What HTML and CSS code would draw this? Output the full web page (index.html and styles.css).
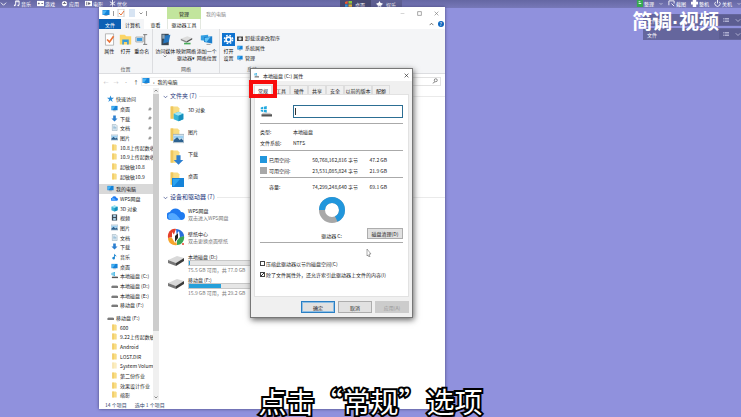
FILE: index.html
```html
<!DOCTYPE html>
<html lang="zh-CN">

<head>
    <meta charset="UTF-8">
    <meta name="viewport" content="width=device-width, initial-scale=1.0">
    <title>我的电脑</title>
    <link rel="stylesheet" href="styles.css">
</head>

<body>
    <!-- shared icons -->
    <svg class="defs" width="0" height="0">
        <symbol id="folder" viewBox="0 0 16 16"><path d="M3 1h8l2 2v12H3z" fill="#f8dc83"/><path d="M3 1h3v14H3z" fill="#efc75e"/></symbol>
        <symbol id="monitor" viewBox="0 0 16 16"><path d="M1 2h14v10H1z" fill="#1583d8"/><path d="M2 3h8L4 11H2z" fill="#49b5f5"/><path d="M5 13h6v1H5z" fill="#567"/></symbol>
        <symbol id="down" viewBox="0 0 16 16"><path d="M5 1h6v7h4l-7 7-7-7h4z" fill="#2c7fd0"/></symbol>
        <symbol id="doc" viewBox="0 0 16 16"><path d="M3 1h8l3 3v11H3z" fill="#e8f1f7" stroke="#7d97a8"/><path d="M5 5h5M5 8h7M5 11h7" stroke="#4587b5"/></symbol>
        <symbol id="picture" viewBox="0 0 16 16"><path d="M0 2h16v12H0z" fill="#dfe9f0" stroke="#8ca3b5"/><path d="M1 4h14v4H1z" fill="#9bd0f2"/><path d="M1 10l5-4 4 4 2-2 3 3v2H1z" fill="#2c6290"/></symbol>
        <symbol id="cube" viewBox="0 0 16 16"><path d="M8 1l7 3v8l-7 3-7-3V4z" fill="#38b5d8"/><path d="M8 1l7 3-7 3-7-3z" fill="#a2e5f3"/><path d="M8 7l7-3v8l-7 3z" fill="#168fbd"/></symbol>
        <symbol id="cloud" viewBox="0 0 18 14"><path d="M4 13a4 4 0 0 1-1-8 6 6 0 0 1 11 0 4 4 0 0 1 0 8z" fill="#1f7af0"/><path d="M2 7c5-3 8 1 12 6H5C2 13 0 10 2 7z" fill="#54a9ff"/></symbol>
        <symbol id="video" viewBox="0 0 16 16"><path d="M2 1h12v14H2z" fill="#3d4b57"/><path d="M5 2h6v5H5zM5 9h6v5H5z" fill="#a9cfe6"/></symbol>
        <symbol id="note" viewBox="0 0 16 16"><path d="M7 1c1 3 6 3 5 8-1-3-3-3-3-3v6a3 3 0 1 1-2-3z" fill="#1c86d1"/></symbol>
        <symbol id="drive" viewBox="0 0 18 12"><path d="M1 6l9-4 7 2-8 5z" fill="#d9d9d9"/><path d="M1 6l8 3v3L1 9z" fill="#777"/><path d="M9 9l8-5v3l-8 5z" fill="#3c3c3c"/></symbol>
        <symbol id="smalldrive" viewBox="0 0 16 16"><path d="M3 7h11l2 3H1z" fill="#c8c8c8"/><path d="M1 10h15v3H1z" fill="#3c3c3c"/></symbol>
        <symbol id="windrive" viewBox="0 0 16 16"><path d="M1 2l3-1v3H1zM5 1l4-1v4H5zM1 5h3v3L1 7zM5 5h4v4L5 8z" fill="#22a9df"/><path d="M4 9h9l3 2H2z" fill="#c8c8c8"/><path d="M2 11h14v3H2z" fill="#555"/></symbol>
        <symbol id="star" viewBox="0 0 16 16"><path d="M8 1l2 5h6l-5 4 2 6-5-4-5 4 2-6-5-4h6z" fill="#2b8dd9"/></symbol>
        <symbol id="pin" viewBox="0 0 8 8"><path d="M4 1l3 3-2 1-1 2-3-3 2-1zM3 5L1 7" fill="#999" stroke="#888"/></symbol>
        <symbol id="chev" viewBox="0 0 8 8"><path d="M1 3l3 3 3-3" fill="none" stroke="currentColor"/></symbol>
        <symbol id="up" viewBox="0 0 8 8"><path d="M1 5l3-3 3 3" fill="none" stroke="currentColor"/></symbol>
        <symbol id="cross" viewBox="0 0 8 8"><path d="M1 1l6 6M7 1L1 7" fill="none" stroke="currentColor"/></symbol>
        <symbol id="list" viewBox="0 0 8 6"><path d="M0 1h1M2 1h6M0 3h1M2 3h6M0 5h1M2 5h6" stroke="currentColor"/></symbol>
        <symbol id="gear" viewBox="0 0 16 16"><path d="M0 0h16v16H0z" fill="#0f73d0"/><circle cx="8" cy="8" r="3" fill="none" stroke="#fff" stroke-width="2"/><circle cx="8" cy="8" r="5" fill="none" stroke="#fff" stroke-width="2" stroke-dasharray="2 2"/></symbol>
    </svg>

    <header class="topbar">
        <nav class="top-left">
            <a href="#"><svg viewBox="0 0 8 8"><use href="#chev"/></svg></a>
            <a href="#"><svg viewBox="0 0 8 8"><path d="M3 6V1h4v5M3 2h4" fill="none" stroke="#fff"/><circle cx="2" cy="6" r="1" fill="#fff"/><circle cx="6" cy="6" r="1" fill="#fff"/></svg>音乐</a>
            <a href="#"><svg viewBox="0 0 8 8"><path d="M0 1h8v6H0z" fill="#fff"/><path d="M1 4h2M2 3v2M5 4h2" stroke="#667"/></svg>游戏</a>
            <a href="#"><svg viewBox="0 0 8 8"><circle cx="4" cy="4" r="3" fill="#fff"/><path d="M2 4h4M4 2v2" stroke="#667"/></svg>应用</a>
            <a href="#"><svg viewBox="0 0 8 8"><path d="M0 1h8v6H0z" fill="#fff"/><path d="M2 2v4M4 3l2 1-2 1z" stroke="#667"/></svg>电影</a>
            <a href="#"><svg viewBox="0 0 8 8"><path d="M4 0v8M1 2l6 4M7 2L1 6" stroke="#fff"/></svg>优化</a>
        </nav>
        <nav class="top-mid">
            <a href="#" class="current"><svg viewBox="0 0 8 8"><path d="M0 1l3-1v3H0z" fill="#f65b2e"/><path d="M4 0h4v3H4z" fill="#8cc63f"/><path d="M0 4h3v3H0z" fill="#2ea8e8"/><path d="M4 4h4v4H4z" fill="#fcc62d"/></svg>桌面</a>
            <a href="#"><svg viewBox="0 0 8 8"><path d="M4 0l1 2 3 1-2 2v3L4 6 2 8V5L0 3l3-1z" fill="#fff"/></svg>娱乐</a>
        </nav>
        <nav class="top-right">
            <a href="#"><svg viewBox="0 0 8 8"><path d="M1 0h7v8H1z" fill="#36a852"/><path d="M3 2h2M3 4h3" stroke="#fff"/></svg>整理</a>
            <a href="#"><svg class="tiny"><use href="#chev"/></svg></a>
            <a href="#"><svg viewBox="0 0 8 8"><path d="M1 6V1h6v3M4 4l3 3" fill="none" stroke="#fff"/></svg>截图</a>
            <a href="#"><svg viewBox="0 0 8 8"><path d="M0 2h8v3H0zM2 0h4v2H2zM2 5h4v3H2z" fill="#fff"/></svg>整机</a>
            <a href="#"><svg viewBox="0 0 8 8"><path d="M2 2a3 3 0 1 0 4 0M4 0v4" fill="none" stroke="#fff"/></svg>关机</a>
            <a href="#"><svg class="tiny"><use href="#chev"/></svg></a>
        </nav>
    </header>

    <aside class="widgets">
        <div class="widget"><span>文件夹</span><button aria-label="文件夹菜单"><svg><use href="#list"/></svg><svg><use href="#chev"/></svg></button></div>
        <div class="widget"><span>文件</span><button aria-label="文件菜单"><svg><use href="#list"/></svg><svg><use href="#chev"/></svg></button></div>
    </aside>
    <div class="watermark">简调·视频</div>

    <main class="explorer">
        <div class="titlebar">
            <div class="quick">
                <svg><use href="#monitor"/></svg><i></i>
                <svg viewBox="0 0 8 8"><path d="M1 0h6v8H1z" fill="#fff" stroke="#ccc"/><path d="M2 4l2 2 3-4" fill="none" stroke="#e8733a"/></svg>
                <svg viewBox="0 0 8 8"><path d="M1 0h6v8H1z" fill="#d7e4f3"/></svg>
                <svg class="tiny"><use href="#chev"/></svg><i></i>
            </div>
            <span class="context">管理</span>
            <span class="window-name">我的电脑</span>
            <div class="controls">
                <button aria-label="最小化"><svg viewBox="0 0 8 8"><path d="M1 4h6" stroke="#bbb"/></svg></button>
                <button aria-label="最大化"><svg viewBox="0 0 8 8"><path d="M1 1h6v6H1z" fill="none" stroke="#777"/></svg></button>
                <button aria-label="关闭"><svg><use href="#cross"/></svg></button>
            </div>
        </div>
        <div class="tabs">
            <button class="file">文件</button>
            <button class="open">计算机</button>
            <button>查看</button>
            <button class="tool">驱动器工具</button>
            <div class="tabs-end"><svg><use href="#up"/></svg><span class="help">?</span></div>
        </div>
        <div class="ribbon">
            <section class="group place">
                <div class="actions">
                    <button><svg viewBox="0 0 16 16"><path d="M3 1h10v14H3z" fill="#fff" stroke="#aaa"/><path d="M5 8l3 3 5-7" fill="none" stroke="#e8733a" stroke-width="2"/></svg>属性</button>
                    <button><svg viewBox="0 0 16 16"><path d="M1 2h6l2 2h6v10H1z" fill="#fbd567"/><path d="M4 14V8h8v6h-2v-3H6v3z" fill="#379ad8"/></svg>打开</button>
                    <button><svg viewBox="0 0 16 16"><path d="M1 5h9v6H1z" fill="#fff" stroke="#999"/><path d="M2 6h7v4H2z" fill="#3e9bdc"/><path d="M10 2h5M12 2v12M10 14h5" stroke="#666"/></svg>重命名</button>
                </div>
                <p>位置</p>
            </section>
            <section class="group net">
                <div class="actions">
                    <button><svg viewBox="0 0 16 16"><path d="M3 1h9v14H3z" fill="#394856"/><path d="M7 3l7-1-2 9-7 2z" fill="#2878c0"/><path d="M4 2h3v5H4z" fill="#8fa5b5"/></svg>访问媒体<svg class="tiny"><use href="#chev"/></svg></button>
                    <button><svg viewBox="0 0 16 16"><path d="M1 7l8-3 6 2-7 4z" fill="#ddd"/><path d="M1 7l7 3v2L1 9z" fill="#888"/><path d="M8 10l7-4v2l-7 4z" fill="#555"/><path d="M5 13h8" stroke="#48ad5a" stroke-width="2"/></svg>映射网络<br>驱动器▾</button>
                    <button><svg viewBox="0 0 16 16"><path d="M1 3l9-1v8l-9-1z" fill="#35a0e2"/><path d="M5 5l10-1v9L5 11z" fill="#1c7fcd"/><path d="M6 6l7-1-5 6-2-1z" fill="#66c7f7"/><path d="M8 14h5" stroke="#888"/></svg>添加一个<br>网络位置</button>
                </div>
                <p>网络</p>
            </section>
            <section class="group system">
                <div class="actions">
                    <button><svg><use href="#gear"/></svg>打开<br>设置</button>
                    <div class="stack">
                        <button><svg viewBox="0 0 8 8"><path d="M0 2h8v6H0z" fill="#444"/><circle cx="4" cy="5" r="2" fill="#ddd"/></svg>卸载或更改程序</button>
                        <button><svg><use href="#monitor"/></svg>系统属性</button>
                        <button><svg><use href="#monitor"/></svg>管理</button>
                    </div>
                </div>
                <p>系统</p>
            </section>
        </div>
        <div class="address">
            <button class="dim">←</button><button class="dim">→</button><button class="dim">·</button><button>↑</button>
            <div class="path"><svg><use href="#monitor"/></svg><span>›</span>我的电脑</div>
            <div class="search"><svg viewBox="0 0 8 8"><circle cx="5" cy="3" r="2" fill="none" stroke="#666"/><path d="M4 5L1 7" stroke="#666"/></svg></div>
        </div>
        <div class="body">
            <nav class="tree">
                <a href="#" class="root"><svg><use href="#star"/></svg>快速访问</a>
                <a href="#"><svg><use href="#monitor"/></svg>桌面<svg class="pin"><use href="#pin"/></svg></a>
                <a href="#"><svg><use href="#down"/></svg>下载<svg class="pin"><use href="#pin"/></svg></a>
                <a href="#"><svg><use href="#doc"/></svg>文档<svg class="pin"><use href="#pin"/></svg></a>
                <a href="#"><svg><use href="#picture"/></svg>图片<svg class="pin"><use href="#pin"/></svg></a>
                <a href="#"><svg><use href="#folder"/></svg>10.8上传起数收</a>
                <a href="#"><svg><use href="#folder"/></svg>10.9上传起数收</a>
                <a href="#"><svg><use href="#folder"/></svg>起敏敏10.8</a>
                <a href="#"><svg><use href="#folder"/></svg>起敏敏10.9</a>
                <a href="#" class="root selected"><svg><use href="#monitor"/></svg>我的电脑</a>
                <a href="#"><svg><use href="#cloud"/></svg>WPS网盘</a>
                <a href="#"><svg><use href="#cube"/></svg>3D 对象</a>
                <a href="#"><svg><use href="#video"/></svg>视频</a>
                <a href="#"><svg><use href="#picture"/></svg>图片</a>
                <a href="#"><svg><use href="#doc"/></svg>文档</a>
                <a href="#"><svg><use href="#down"/></svg>下载</a>
                <a href="#"><svg><use href="#note"/></svg>音乐</a>
                <a href="#"><svg><use href="#monitor"/></svg>桌面</a>
                <a href="#"><svg><use href="#windrive"/></svg>本地磁盘 (C:)</a>
                <a href="#"><svg><use href="#smalldrive"/></svg>本地磁盘 (D:)</a>
                <a href="#"><svg><use href="#smalldrive"/></svg>本地磁盘 (E:)</a>
                <a href="#"><svg><use href="#smalldrive"/></svg>移动盘 (F:)</a>
                <a href="#" class="root"><svg><use href="#smalldrive"/></svg>移动盘 (F:)</a>
                <a href="#"><svg><use href="#folder"/></svg>600</a>
                <a href="#"><svg><use href="#folder"/></svg>9.22上传起数敏</a>
                <a href="#"><svg><use href="#folder"/></svg>Android</a>
                <a href="#"><svg><use href="#folder"/></svg>LOST.DIR</a>
                <a href="#"><svg class="faded"><use href="#folder"/></svg>System Volume</a>
                <a href="#"><svg><use href="#folder"/></svg>第二份作业</a>
                <a href="#"><svg><use href="#folder"/></svg>效果设计作业</a>
                <a href="#"><svg><use href="#folder"/></svg>缩影</a>
            </nav>
            <div class="scrollbar">
                <svg><use href="#up"/></svg>
                <div class="thumb"></div>
                <svg><use href="#chev"/></svg>
            </div>
            <div class="files">
                <h2><svg><use href="#chev"/></svg>文件夹 (7)</h2>
                <ul class="folders">
                    <li><svg viewBox="0 0 16 18"><use href="#folder" width="14" height="17"/><use href="#cube" x="5" y="7" width="11" height="11"/></svg><div>3D 对象</div></li>
                    <li><svg viewBox="0 0 16 18"><use href="#folder" width="14" height="17"/><use href="#picture" x="5" y="7" width="11" height="11"/></svg><div>图片</div></li>
                    <li><svg viewBox="0 0 16 18"><use href="#folder" width="14" height="17"/><use href="#down" x="5" y="6" width="11" height="12"/></svg><div>下载</div></li>
                    <li><svg viewBox="0 0 16 18"><use href="#folder" width="14" height="17"/><path d="M4 8h12v9H4z" fill="#1583d8"/><path d="M5 9h7l-6 7H5z" fill="#2ba3ef"/></svg><div>桌面</div></li>
                </ul>
                <h2><svg><use href="#chev"/></svg>设备和驱动器 (7)</h2>
                <ul class="devices">
                    <li><svg><use href="#cloud"/></svg><div>WPS网盘<small>双击进入WPS网盘</small></div></li>
                    <li><svg viewBox="0 0 18 18"><path d="M9 1C4 0 0 5 1 10l5-1z" fill="#e5402c"/><path d="M1 10c0 5 5 8 9 7L8 9z" fill="#f7a52b"/><path d="M10 17c5 0 8-5 7-9l-7 1z" fill="#3aa655"/><path d="M9 1c5 0 8 4 8 7l-7 2z" fill="#286fdc"/><path d="M5 4l3 4 4-5 1 6-5 6-3-5z" fill="#fff"/><path d="M8 8l3-3v5l-3 4z" fill="#222"/><circle cx="16" cy="16" r="1" fill="#e5402c"/></svg><div>壁纸中心<small>双击更换桌面壁纸</small></div></li>
                    <li><svg><use href="#drive"/></svg><div>本地磁盘 (D:)<span class="bar"><b style="width: 2%"></b></span><small>75.5 GB 可用，共 77.0 GB</small></div></li>
                    <li><svg><use href="#drive"/></svg><div>移动盘 (F:)<span class="bar"><b style="width: 48%"></b></span><small>15.9 GB 可用，共 29.2 GB</small></div></li>
                </ul>
            </div>
        </div>
        <footer class="status"><span>14 个项目</span><span>选中 1 个项目</span></footer>
    </main>

    <div class="dialog" role="dialog" aria-label="本地磁盘 (C:) 属性">
        <div class="dialog-title">
            <svg><use href="#windrive"/></svg>本地磁盘 (C:) 属性
            <button aria-label="关闭"><svg><use href="#cross"/></svg></button>
        </div>
        <div class="dialog-tabs">
            <button class="open">常规</button><button>工具</button><button>硬件</button><button>共享</button><button>安全</button><button class="wide">以前的版本</button><button>配额</button>
        </div>
        <div class="panel">
            <div class="name-row">
                <svg><use href="#windrive"/></svg>
                <input type="text" aria-label="卷标">
            </div>
            <dl>
                <dt>类型:</dt><dd>本地磁盘</dd>
                <dt>文件系统:</dt><dd>NTFS</dd>
            </dl>
            <table>
                <tr><td class="key"><i class="used"></i></td><td>已用空间:</td><td class="num">50,768,162,816 字节</td><td class="num">47.2 GB</td></tr>
                <tr><td class="key"><i class="free"></i></td><td>可用空间:</td><td class="num">23,531,085,824 字节</td><td class="num">21.9 GB</td></tr>
                <tr class="total"><td></td><td>容量:</td><td class="num">74,299,248,640 字节</td><td class="num">69.1 GB</td></tr>
            </table>
            <div class="chart">
                <svg viewBox="0 0 28 28">
                    <circle cx="14" cy="14" r="10" fill="none" stroke="#a8a8a8" stroke-width="6"/>
                    <circle cx="14" cy="14" r="10" fill="none" stroke="#2196dc" stroke-width="6" pathLength="100" stroke-dasharray="68 32" transform="rotate(180 14 14)"/>
                </svg>
                <span>驱动器 C:</span>
                <button>磁盘清理(D)</button>
            </div>
            <div class="options">
                <label><input type="checkbox">压缩此驱动器以节约磁盘空间(C)</label>
                <label><input type="checkbox" checked>除了文件属性外，还允许索引此驱动器上文件的内容(I)</label>
            </div>
        </div>
        <div class="dialog-buttons">
            <button class="primary">确定</button>
            <button>取消</button>
            <button disabled>应用(A)</button>
        </div>
        <div class="highlight"></div>
        <svg class="cursor" viewBox="0 0 6 8"><path d="M1 0v7l1-1 1 2h1L3 5h2z" fill="#fff" stroke="#555" stroke-width="0.5"/></svg>
    </div>

    <div class="subtitle">点击“常规”选项</div>
</body>

</html>
```
FILE: styles.css
```css
* {
    box-sizing: border-box;
}

body {
    margin: 0;
    height: 100vh;
    overflow: hidden;
    position: relative;
    background-color: #9091dd;
    color: #222;
    font: 5px/7px "Noto Sans CJK SC", sans-serif;
}

button {
    font: inherit;
    color: inherit;
    padding: 0;
    border: none;
    background: none;
}

a {
    color: inherit;
    text-decoration: none;
}

p, h2, ul, dl, dd {
    margin: 0;
    padding: 0;
}

svg {
    width: 8px;
    height: 8px;
    flex: none;
}

svg.tiny {
    width: 4px;
    height: 4px;
}

.defs {
    position: absolute;
}

/* top bar */
.topbar {
    height: 8px;
    display: grid;
    grid-template-columns: 1fr auto 1fr;
    background: linear-gradient(#6567a3, #7778b8);
    color: #fff;
}

.topbar nav, .topbar a {
    display: flex;
    align-items: center;
    height: 7px;
}

.topbar a {
    gap: 1px;
}

.topbar svg {
    width: 7px;
    height: 7px;
}

.topbar svg.tiny {
    width: 4px;
}

.top-left {
    gap: 6px;
}

.topbar .top-mid {
    height: 8px;
    background-color: #5d5e91;
}

.topbar .top-mid a {
    width: 31px;
    height: 8px;
    justify-content: center;
    gap: 3px;
}

.topbar .top-mid .current {
    background-color: #474970;
}

.top-right {
    justify-content: flex-end;
    gap: 5px;
}

/* desktop widgets */
.widgets {
    position: absolute;
    top: 14px;
    right: 0;
    width: 98px;
    display: grid;
    gap: 2px;
}

.widget {
    display: flex;
    justify-content: space-between;
    align-items: center;
    height: 12px;
    padding-left: 4px;
    background-color: #65669d;
    color: #fff;
}

.widget button {
    display: flex;
    align-items: center;
    gap: 6px;
    height: 10px;
    padding-left: 4px;
    color: #c9cae6;
    background-color: #5c5d91;
}

.widget svg {
    width: 6px;
    height: 6px;
}

.watermark {
    position: absolute;
    top: 12px;
    right: 22px;
    font: 700 20px/20px "Liberation Sans", "Noto Sans CJK SC", sans-serif;
    color: #fff;
}

/* explorer window */
.explorer {
    position: absolute;
    top: 7px;
    right: 40%;
    bottom: 8px;
    left: 99px;
    display: flex;
    flex-direction: column;
    background-color: #fff;
    box-shadow: 0 0 3px #44457a;
}

.titlebar {
    display: flex;
    align-items: center;
    height: 12px;
}

.quick {
    display: flex;
    align-items: center;
    gap: 3px;
    width: 68px;
    padding-left: 3px;
}

.quick i {
    width: 1px;
    height: 5px;
    background-color: #999;
}

.context {
    width: 34px;
    height: 12px;
    line-height: 13px;
    text-align: center;
    background-color: #c2e59d;
}

.window-name {
    padding-left: 5px;
    color: #888;
}

.controls {
    display: flex;
    gap: 12px;
    margin-left: auto;
    padding-right: 6px;
    color: #777;
}

.controls button {
    display: flex;
}

.controls svg {
    width: 5px;
    height: 5px;
}

.tabs {
    display: flex;
    height: 10px;
}

.tabs button {
    width: 23px;
}

.tabs .file {
    width: 22px;
    color: #fff;
    background-color: #0c5fb4;
}

.tabs .open {
    background-color: #f4f5f7;
}

.tabs .tool {
    width: 34px;
    border: solid #e3e8e0;
    border-width: 0 1px;
}

.tabs-end {
    display: flex;
    align-items: center;
    gap: 4px;
    margin-left: auto;
    padding-right: 1px;
}

.tabs-end svg {
    width: 5px;
    height: 5px;
}

.help {
    width: 6px;
    height: 6px;
    line-height: 6px;
    text-align: center;
    border-radius: 50%;
    color: #fff;
    background-color: #0c65bd;
}

.ribbon {
    display: flex;
    height: 45px;
    background-color: #f4f5f7;
    border-bottom: 1px solid #dcdde0;
}

.group {
    display: flex;
    flex-direction: column;
    justify-content: space-between;
    padding: 4px 2px 1px;
    border-right: 1px solid #dcdde0;
}

.group p {
    text-align: center;
    color: #555;
}

.place {
    width: 54px;
}

.net {
    width: 67px;
}

.system {
    width: 64px;
    border-right: none;
}

.actions {
    display: flex;
}

.actions > button {
    display: flex;
    flex: 1;
    flex-direction: column;
    align-items: center;
    white-space: nowrap;
}

.actions > button > svg:first-child {
    width: 13px;
    height: 13px;
    margin-bottom: 1px;
}

.system .actions > button {
    flex: none;
    width: 13px;
}

.stack {
    display: grid;
    gap: 3px;
    padding: 1px 0 0 2px;
}

.stack button {
    display: flex;
    align-items: center;
    gap: 2px;
    white-space: nowrap;
}

.stack svg {
    width: 6px;
    height: 6px;
}

.address {
    display: flex;
    align-items: center;
    height: 14px;
    padding: 0 4px 0 2px;
}

.address button {
    width: 10px;
}

.address .dim {
    color: #bbb;
}

.path {
    display: flex;
    flex: 1;
    align-items: center;
    gap: 3px;
    height: 9px;
    border: 1px solid #eee;
}

.search {
    display: flex;
    align-items: center;
    justify-content: flex-end;
    width: 60px;
    height: 9px;
    margin-left: 4px;
    padding-right: 2px;
    border: 1px solid #e2e2e2;
}

.search svg {
    width: 6px;
    height: 6px;
}

.body {
    display: flex;
    flex: 1;
    min-height: 0;
}

.tree {
    display: flex;
    flex-direction: column;
    width: 54px;
    padding-top: 6px;
    overflow: hidden;
}

.tree a {
    display: flex;
    flex: 1;
    align-items: center;
    gap: 2px;
    min-height: 0;
    padding-left: 12px;
    white-space: nowrap;
}

.tree .root {
    padding-left: 8px;
}

.tree a + .root {
    margin-top: 3px;
}

.tree .selected {
    background-color: #d9d9d9;
}

.tree svg {
    width: 7px;
    height: 7px;
}

.tree .pin {
    width: 4px;
    height: 4px;
    margin: 0 1px 0 auto;
}

.tree .faded {
    opacity: 0.5;
}

.scrollbar {
    display: flex;
    flex-direction: column;
    align-items: center;
    width: 6px;
    background-color: #f0f0f0;
}

.scrollbar svg {
    width: 4px;
    height: 6px;
}

.thumb {
    width: 100%;
    height: 76%;
    margin-bottom: auto;
    background-color: #cdcdcd;
}

.files {
    flex: 1;
    padding: 4px 0 0 4px;
}

.files h2 {
    display: flex;
    align-items: center;
    gap: 2px;
    font-size: 6px;
    line-height: 8px;
    font-weight: 400;
    color: #26387c;
}

.files h2 svg {
    width: 5px;
    height: 5px;
}

.files h2::after {
    content: "";
    flex: 1;
    height: 1px;
    background-color: #eaeaea;
}

.files ul {
    list-style: none;
    padding: 4px 0 1px 4px;
}

.files li {
    display: flex;
    gap: 3px;
    height: 23px;
}

.files .folders li {
    height: 22px;
}

.files li > div {
    padding-top: 2px;
}

.files li > svg {
    width: 18px;
    height: 18px;
}

.devices small {
    display: block;
    font-size: 5px;
    color: #777;
}

.bar {
    display: block;
    width: 68px;
    height: 6px;
    border: 1px solid #c8c8c8;
    background-color: #e6e6e6;
}

.bar b {
    display: block;
    height: 100%;
    background-color: #26a0da;
}

.status {
    display: flex;
    align-items: center;
    gap: 8px;
    height: 9px;
    padding-left: 6px;
    color: #33456b;
}

/* drive properties */
.dialog {
    position: absolute;
    top: 68px;
    left: 250px;
    width: 22%;
    padding: 0 3px 4px;
    border: 1px solid #777;
    background-color: #f0f0f0;
    box-shadow: 1px 2px 6px #666;
}

.dialog-title {
    display: flex;
    align-items: center;
    gap: 4px;
    height: 12px;
    margin: 0 -3px;
    padding: 0 3px;
    background-color: #fff;
}

.dialog-title svg {
    width: 5px;
    height: 5px;
}

.dialog-title button {
    display: flex;
    margin-left: auto;
}

.dialog-tabs {
    display: flex;
    height: 13px;
    padding-top: 4px;
}

.dialog-tabs button {
    width: 18px;
    border: 1px solid #ddd;
    border-bottom: none;
    white-space: nowrap;
}

.dialog-tabs .open {
    background-color: #fff;
}

.dialog-tabs .wide {
    width: 28px;
}

.panel {
    height: 203px;
    padding: 10px 5px 0;
    border: 1px solid #e2e2e2;
    background-color: #fff;
}

.name-row {
    display: flex;
    align-items: center;
    justify-content: space-between;
    padding-bottom: 5px;
    border-bottom: 1px solid #aaa;
}

.name-row svg {
    width: 12px;
    height: 12px;
}

.name-row input {
    width: 77%;
    height: 13px;
    font: inherit;
    padding: 0 1px;
    border: 1px solid #2c6e93;
    border-radius: 0;
    background: linear-gradient(#333, #333) 1px 2px / 1px 7px no-repeat #fff;
}

.panel dl {
    display: grid;
    grid-template-columns: 33px 1fr;
    row-gap: 4px;
    padding: 4px 0;
    border-bottom: 1px solid #aaa;
}

.panel table {
    width: 100%;
    border-collapse: collapse;
    white-space: nowrap;
}

.panel td {
    height: 12px;
    padding: 0;
}

.panel tr:first-child td {
    height: 14px;
    padding-top: 2px;
}

.panel .num {
    text-align: right;
    padding-right: 11px;
}

.panel .num:last-child {
    width: 34px;
    padding-right: 16px;
}

.key {
    width: 9px;
}

.key i {
    display: block;
    width: 7px;
    height: 7px;
}

.used {
    background-color: #2196dc;
}

.free {
    background-color: #a8a8a8;
}

.panel .total td {
    height: 18px;
    border-top: 1px solid #aaa;
}

.chart {
    display: grid;
    grid-template-columns: 36px 1fr 36px;
    justify-items: center;
    align-items: end;
    padding: 1px 0 3px;
    border-bottom: 1px solid #aaa;
}

.chart svg {
    grid-column: 2;
    width: 28px;
    height: 28px;
    margin-bottom: 4px;
}

.chart span {
    grid-column: 2;
    grid-row: 2;
}

.chart button {
    grid-column: 3;
    grid-row: 2;
    width: 36px;
    height: 11px;
}

.chart button, .dialog-buttons button {
    border: 1px solid #adadad;
    background-color: #e1e1e1;
}

.options {
    display: grid;
    gap: 4px;
    padding-top: 17px;
}

.options label {
    display: flex;
    align-items: center;
    gap: 1px;
    white-space: nowrap;
}

.options input {
    appearance: none;
    width: 5px;
    height: 5px;
    margin: 0;
    border: 1px solid #444;
    background-color: #fff;
}

.options input:checked {
    background-image: linear-gradient(135deg, #fff 40%, #333 40%, #333 60%, #fff 60%);
}

.dialog-buttons {
    display: flex;
    justify-content: flex-end;
    gap: 3px;
    padding-top: 4px;
}

.dialog-buttons button {
    width: 34px;
    height: 12px;
}

.dialog-buttons .primary {
    border: 1px solid #2a7fc4;
    outline: 1px solid #8fbfe4;
    outline-offset: -2px;
}

.dialog-buttons button:disabled {
    color: #999;
    border-color: #ccc;
    background-color: #ccc;
}

.highlight {
    position: absolute;
    top: 11px;
    left: -2px;
    width: 28px;
    height: 18px;
    border: 4px solid #f80c0c;
}

.cursor {
    position: absolute;
    top: 180px;
    left: 115px;
    width: 6px;
    height: 8px;
}

.subtitle {
    position: absolute;
    right: 0;
    bottom: 0;
    left: 0;
    font-size: 28px;
    line-height: 32px;
    text-align: center;
    color: #fff;
    -webkit-text-stroke: 4px #000;
    paint-order: stroke fill;
}
```
